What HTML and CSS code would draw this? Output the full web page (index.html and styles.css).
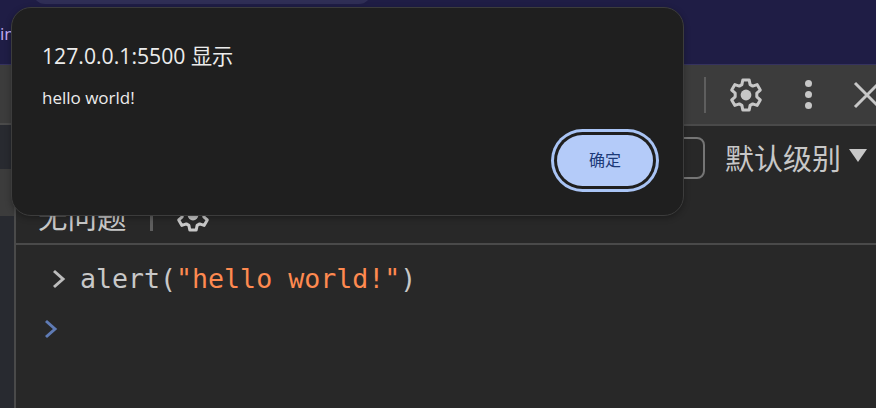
FILE: index.html
```html
<!DOCTYPE html>
<html lang="zh-CN">
<head>
<meta charset="utf-8">
<title>alert</title>
<link rel="stylesheet" href="styles.css">
</head>
<body>
<div class="browser-top">
  <div class="tab-pill"></div>
  <span class="page-text">in</span>
</div>
<div class="devtools">
  <div class="side">
    <div class="side-a"></div>
    <div class="side-b"></div>
    <div class="side-c"></div>
    <div class="side-d"></div>
  </div>
  <div class="main">
    <div class="toolbar">
      <span class="tb-div"></span>
      <svg class="gear-big" viewBox="0 0 36 36"><path class="gear-path" d="M14.8 3h6.4l.9 4.6 2.6 1.5 4.4-1.5 3.2 5.5-3.5 3.1v3.6l3.5 3.1-3.2 5.5-4.4-1.5-2.6 1.5-.9 4.6h-6.4l-.9-4.6-2.6-1.5-4.4 1.5-3.2-5.5 3.5-3.1v-3.6l-3.5-3.1 3.2-5.5 4.4 1.5 2.6-1.5z"/><circle class="gear-dot" cx="18" cy="18" r="5.4"/></svg>
      <span class="dots"><i></i><i></i><i></i></span>
      <svg class="close" viewBox="0 0 30 30"><path class="x-path" d="M2 3l24 24M26 3L2 27"/></svg>
    </div>
    <div class="filter">
      <div class="filter-box"></div>
      <span class="level">默认级别</span>
      <span class="tri"></span>
    </div>
    <div class="issues">
      <span class="issue-text">无问题</span>
      <span class="issue-div"></span>
      <svg class="gear-small" viewBox="0 0 36 36"><path class="gear-path" d="M14.8 3h6.4l.9 4.6 2.6 1.5 4.4-1.5 3.2 5.5-3.5 3.1v3.6l3.5 3.1-3.2 5.5-4.4-1.5-2.6 1.5-.9 4.6h-6.4l-.9-4.6-2.6-1.5-4.4 1.5-3.2-5.5 3.5-3.1v-3.6l-3.5-3.1 3.2-5.5 4.4 1.5 2.6-1.5z"/><circle class="gear-dot" cx="18" cy="18" r="5.4"/></svg>
    </div>
    <div class="console">
      <div class="line">
        <svg class="chev" viewBox="0 0 14 20"><path class="chev-grey" d="M2 2l9 8-9 8"/></svg>
        <code class="code">alert(<span class="str">"hello world!"</span>)</code>
      </div>
      <div class="prompt">
        <svg class="chev" viewBox="0 0 14 20"><path class="chev-blue" d="M2 2l9 8-9 8"/></svg>
      </div>
    </div>
  </div>
</div>
<div class="dialog">
  <div class="d-title">127.0.0.1:5500 显示</div>
  <div class="d-msg">hello world!</div>
  <div class="d-actions"><button class="ok">确定</button></div>
</div>
</body>
</html>
```
FILE: styles.css
```css
* { box-sizing: border-box; }
html, body { margin: 0; padding: 0; }
body {
  width: 876px; height: 408px; overflow: hidden; position: relative;
  background: #282828;
  font-family: "Liberation Sans", "Noto Sans CJK SC", sans-serif;
  display: flex; flex-direction: column;
}
.browser-top {
  height: 65px; background: #1f1d45; position: relative; flex: none;
  border-bottom: 1px solid #35325e;
}
.tab-pill {
  position: absolute; left: 33px; top: -20px; width: 338px; height: 24px;
  border-radius: 12px; background: #2f2e55;
}
.page-text {
  position: absolute; left: 0; top: 24px;
  font: 17px/20px "Open Sans", sans-serif; color: #c4aef5;
}
.devtools { flex: 1; display: flex; min-height: 0; }
.side { width: 16px; flex: none; display: flex; flex-direction: column; border-right: 2px solid #4a4a4a; }
.side-a { height: 60px; background: #3c3c3c; border-bottom: 2px solid #4a4a4a; }
.side-b { height: 44px; background: #282a30; }
.side-c { height: 47px; background: #3c3c3c; }
.side-d { flex: 1; background: #282a30; }
.main { flex: 1; display: flex; flex-direction: column; min-width: 0; }
.toolbar {
  height: 61px; background: #3c3c3c; border-bottom: 2px solid #4a4a4a;
  display: flex; align-items: center; flex: none; padding-left: 688px;
}
.tb-div { width: 2px; height: 36px; background: #5e5e5e; flex: none; }
.gear-big { width: 36px; height: 36px; margin-left: 22px; flex: none; }
.gear-path { fill: none; stroke: #c7c7c7; stroke-width: 3; stroke-linejoin: round; }
.gear-dot { fill: #c7c7c7; }
.dots { display: flex; flex-direction: column; gap: 4px; margin-left: 41px; flex: none; }
.dots i { display: block; width: 7px; height: 7px; border-radius: 50%; background: #c7c7c7; }
.close { width: 30px; height: 30px; margin-left: 41px; flex: none; }
.x-path { fill: none; stroke: #c7c7c7; stroke-width: 3; }
.filter {
  height: 64px; background: #282828; flex: none; display: flex; align-items: center; padding-left: 500px;
}
.filter-box { width: 189px; height: 42px; border: 2px solid #757575; border-radius: 8px; flex: none; }
.level { margin-left: 20px; margin-top: -3px; font-size: 29px; line-height: 36px; color: #c7c7c7; font-family: "Noto Sans CJK SC", sans-serif; flex: none; }
.tri { width: 0; height: 0; margin-left: 8px; margin-top: -5px; flex: none; border-left: 9px solid transparent; border-right: 9px solid transparent; border-top: 13px solid #c7c7c7; }
.issues {
  height: 55px; background: #282828; border-bottom: 2px solid #4a4a4a; flex: none;
  display: flex; align-items: center; padding-left: 22px;
}
.issue-text { font-size: 29.5px; line-height: 36px; color: #c7c7c7; font-family: "Noto Sans CJK SC", sans-serif; margin-top: -3px; }
.issue-div { width: 3px; height: 28px; background: #5e5e5e; margin-left: 23px; }
.gear-small { width: 36px; height: 36px; margin-left: 22px; margin-top: -3px; }
.console { flex: 1; background: #282828; padding: 17px 0 0 0; }
.line { display: flex; align-items: center; height: 34px; padding-left: 36px; }
.line .chev { width: 14px; height: 20px; flex: none; }
.code { margin-left: 14px; font: 26.6px/34px "DejaVu Sans Mono", monospace; color: #c8c8c8; }
.str { color: #ff8a50; }
.chev-grey, .chev-blue { fill: none; stroke-width: 3; }
.chev-grey { stroke: #bdbdbd; }
.chev-blue { stroke: #5f7bb5; }
.prompt { display: flex; margin-top: 23px; padding-left: 28px; height: 24px; }
.prompt .chev { width: 14px; height: 20px; }
.dialog {
  position: absolute; left: 11px; top: 7px; width: 673px; height: 209px;
  background: #1f1f1f; border: 1px solid #3c3c3c; border-radius: 20px;
  box-shadow: 0 2px 6px rgba(0,0,0,.3);
  padding: 34px 30px 0;
  display: flex; flex-direction: column;
}
.d-title { font: 21.2px/28px "Open Sans", "Noto Sans CJK SC", sans-serif; color: #ececec; }
.d-msg { margin-top: 17px; font: 17px/22px "Open Sans", "Noto Sans CJK SC", sans-serif; color: #ececec; }
.d-actions { margin-top: 26px; display: flex; justify-content: flex-end; }
.ok {
  width: 96px; height: 51px; border-radius: 26px; border: 0; padding: 0 0 3px;
  background: #b4cbf9; color: #1c3a78;
  font: 16px/20px "Noto Sans CJK SC", sans-serif;
  box-shadow: 0 0 0 3px #1f1f1f, 0 0 0 6px #a9c4f5;
}
```
